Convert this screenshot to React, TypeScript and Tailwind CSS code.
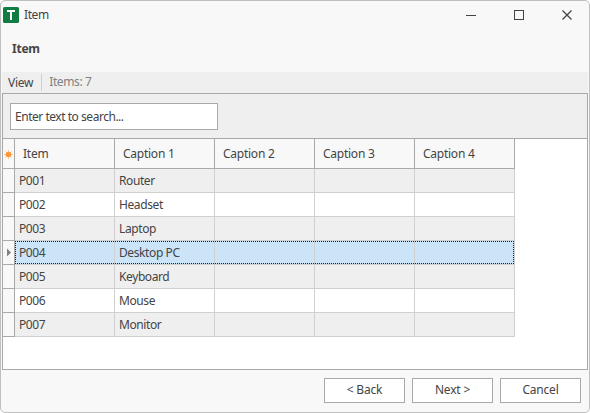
import clsx from 'clsx';

type Row = {
  item: string;
  caption: string;
};

const columns = ['Item', 'Caption 1', 'Caption 2', 'Caption 3', 'Caption 4'];

const rows: Row[] = [
  { item: 'P001', caption: 'Router' },
  { item: 'P002', caption: 'Headset' },
  { item: 'P003', caption: 'Laptop' },
  { item: 'P004', caption: 'Desktop PC' },
  { item: 'P005', caption: 'Keyboard' },
  { item: 'P006', caption: 'Mouse' },
  { item: 'P007', caption: 'Monitor' },
];

const selectedItem = 'P004';

const TitleBar = (): JSX.Element => (
  <header className="flex h-[29px] pl-px pt-1.5">
    <svg className="size-4" viewBox="0 0 16 16">
      <rect width="16" height="16" rx="1.5" fill="#107c41" />
      <path d="M4 3h8v2H9v8H7V5H4z" fill="#fff" />
    </svg>
    <span className="ml-[5px] leading-4 tracking-[-0.4px]">Item</span>
    <svg
      className="ml-auto mr-4 mt-[3px] h-[10px] w-[106px]"
      viewBox="0 0 106 10"
      fill="none"
      stroke="#444"
    >
      <path d="M0 5.5h10" />
      <rect x="48.5" y=".5" width="9" height="9" />
      <path d="M96.5.5l9 9M105.5.5l-9 9" strokeWidth="1.3" />
    </svg>
  </header>
);

const NewRowIcon = (): JSX.Element => (
  <svg className="size-[9px]" viewBox="0 0 9 9">
    <path
      d="M4.5 0v9M0 4.5h9M1.3 1.3l6.4 6.4M7.7 1.3L1.3 7.7"
      stroke="#fcc48c"
      strokeWidth="1"
    />
    <circle cx="4.5" cy="4.5" r="2.8" fill="#fb963a" />
  </svg>
);

const CurrentRowIcon = (): JSX.Element => (
  <svg className="size-[9px]" viewBox="0 0 9 9">
    <path d="M3 0.5v8l4-4z" fill="#808080" />
  </svg>
);

const Grid = (): JSX.Element => (
  <div className="flex flex-1 flex-col items-start bg-white">
    <div className="flex h-[30px] border-b border-[#a9a9a9] bg-[#f8f8f8]">
      <div className="flex w-3 items-center justify-center border-r border-[#a9a9a9] pt-px">
        <NewRowIcon />
      </div>
      {columns.map((column) => (
        <div
          key={column}
          className="flex w-[100px] items-center border-r border-[#a9a9a9] pl-2 pt-px"
        >
          {column}
        </div>
      ))}
    </div>
    {rows.map(({ item, caption }, index) => {
      const isSelected = item === selectedItem;
      return (
        <div key={item} className="flex h-6">
          <div className="flex w-3 items-center justify-center border-b border-r border-[#a9a9a9] bg-[#f8f8f8]">
            {isSelected && <CurrentRowIcon />}
          </div>
          <div
            className={clsx(
              'relative flex tracking-[-0.4px]',
              isSelected
                ? 'bg-[#cce4f7]'
                : index % 2 === 0
                  ? 'bg-[#efefef]'
                  : 'bg-white',
            )}
          >
            {[item, caption, '', '', ''].map((value, cell) => (
              <div
                key={cell}
                className="flex w-[100px] items-center border-b border-r border-[#d0d0d0] pl-1 pt-px"
              >
                {value}
              </div>
            ))}
            {isSelected && <FocusFrame />}
          </div>
        </div>
      );
    })}
  </div>
);

const FocusFrame = (): JSX.Element => (
  <svg
    className="absolute left-0 top-0 h-[23px] w-[499px]"
    viewBox="0 0 499 23"
  >
    <path
      d="M0 .5h499M0 22.5h499M.5 0v23M498.5 0v23"
      fill="none"
      stroke="#222"
      strokeDasharray="1 1"
    />
  </svg>
);

const WizardButton = ({ label }: { label: string }): JSX.Element => (
  <button
    type="button"
    className="h-[25px] w-[81px] border border-[#a9a9a9] bg-white pb-px leading-4 tracking-[-0.2px]"
  >
    {label}
  </button>
);

export default function App(): JSX.Element {
  return (
    <div className="h-[413px] w-[590px] bg-white">
      <div className="flex h-full flex-col rounded-[5px] border border-[#bfbfbf] bg-[#f8f8f8] px-px font-['Noto_Sans','Open_Sans',sans-serif] text-[12px] tracking-[-0.25px] text-[#444]">
        <TitleBar />
        <h1 className="h-[42px] pl-[10px] pt-[11px] font-bold leading-4">
          Item
        </h1>

        <div className="flex h-[21px] items-center bg-[#efefef] pl-1.5">
          <span className="leading-4">View</span>
          <span className="ml-2 h-[17px] w-px bg-[#d0d0d0]" />
          <span className="ml-[7px] pb-px leading-4 tracking-[-0.4px] text-[#808080]">
            Items: 7
          </span>
        </div>

        <main className="flex h-[277px] w-[586px] flex-col border border-[#a9a9a9]">
          <div className="h-[45px] border-b border-[#a9a9a9] bg-[#efefef] pl-[7px] pt-[9px]">
            <input
              type="text"
              placeholder="Enter text to search..."
              className="block h-[27px] w-[208px] border border-[#a9a9a9] bg-white px-1 pb-px tracking-[-0.47px] placeholder:text-[#444]"
            />
          </div>
          <Grid />
        </main>

        <footer className="flex justify-end gap-[7px] pr-[7px] pt-2">
          <WizardButton label="< Back" />
          <WizardButton label="Next >" />
          <WizardButton label="Cancel" />
        </footer>
      </div>
    </div>
  );
}
